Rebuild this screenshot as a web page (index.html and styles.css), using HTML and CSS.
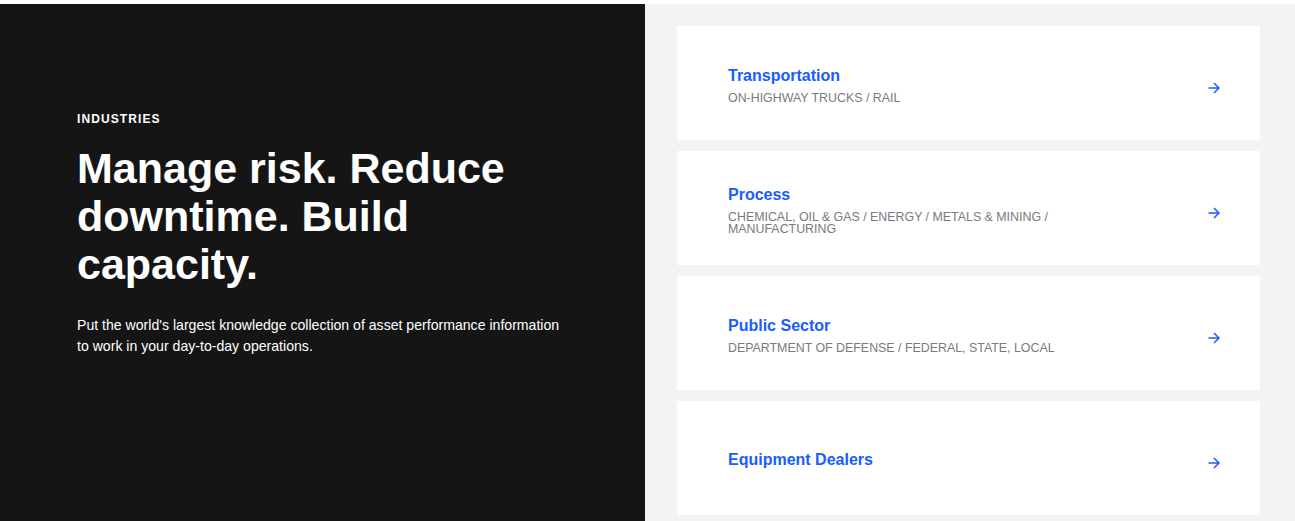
FILE: index.html
```html
<!DOCTYPE html>
<html lang="en">
<head>
<meta charset="utf-8">
<title>Industries</title>
<link rel="stylesheet" href="styles.css">
</head>
<body>
<section class="industries">
  <div class="intro">
    <div class="eyebrow">INDUSTRIES</div>
    <h1 class="headline">Manage risk. Reduce downtime. Build capacity.</h1>
    <p class="lede">Put the world's largest knowledge collection of asset performance information to work in your day-to-day operations.</p>
  </div>
  <div class="list">
    <a class="card" href="#">
      <div class="card-text">
        <div class="card-title">Transportation</div>
        <div class="card-sub">ON-HIGHWAY TRUCKS / RAIL</div>
      </div>
      <svg class="arrow" width="12" height="12" viewBox="0 0 12 12"><path d="M0.5 6H11M6 1l5 5-5 5" fill="none" stroke="#1a5cff" stroke-width="1.5"/></svg>
    </a>
    <a class="card" href="#">
      <div class="card-text">
        <div class="card-title">Process</div>
        <div class="card-sub">CHEMICAL, OIL &amp; GAS / ENERGY / METALS &amp; MINING / MANUFACTURING</div>
      </div>
      <svg class="arrow" width="12" height="12" viewBox="0 0 12 12"><path d="M0.5 6H11M6 1l5 5-5 5" fill="none" stroke="#1a5cff" stroke-width="1.5"/></svg>
    </a>
    <a class="card" href="#">
      <div class="card-text">
        <div class="card-title">Public Sector</div>
        <div class="card-sub">DEPARTMENT OF DEFENSE / FEDERAL, STATE, LOCAL</div>
      </div>
      <svg class="arrow" width="12" height="12" viewBox="0 0 12 12"><path d="M0.5 6H11M6 1l5 5-5 5" fill="none" stroke="#1a5cff" stroke-width="1.5"/></svg>
    </a>
    <a class="card" href="#">
      <div class="card-text">
        <div class="card-title">Equipment Dealers</div>
      </div>
      <svg class="arrow" width="12" height="12" viewBox="0 0 12 12"><path d="M0.5 6H11M6 1l5 5-5 5" fill="none" stroke="#1a5cff" stroke-width="1.5"/></svg>
    </a>
  </div>
</section>
</body>
</html>
```

FILE: styles.css
```css
html, body {
  margin: 0;
  padding: 0;
  background: #ffffff;
  font-family: "Liberation Sans", Arial, sans-serif;
}

body {
  padding-top: 4px;
}

.industries {
  display: flex;
  min-height: 517px;
}

.intro {
  width: 645px;
  flex: none;
  box-sizing: border-box;
  background: #161516;
  color: #ffffff;
  padding: 108px 60px 40px 77px;
}

.eyebrow {
  font-size: 12px;
  font-weight: 700;
  letter-spacing: 1.1px;
  line-height: 14px;
}

.headline {
  margin: 18px 0 0;
  font-size: 43px;
  line-height: 48px;
  font-weight: 700;
  letter-spacing: 0;
  max-width: 460px;
}

.lede {
  margin: 27px 0 0;
  font-size: 14.1px;
  line-height: 21px;
  max-width: 495px;
}

.list {
  flex: 1;
  background: #f3f3f3;
  padding: 22px 35px 6px 32px;
  display: flex;
  flex-direction: column;
  gap: 11px;
}

.card {
  display: flex;
  align-items: center;
  justify-content: space-between;
  height: 114px;
  box-sizing: border-box;
  padding: 4px 40px 0 51px;
  background: #ffffff;
  text-decoration: none;
}

.card-title {
  color: #1a5cff;
  font-size: 16px;
  font-weight: 700;
  line-height: 20px;
}

.card-sub {
  margin-top: 6px;
  color: #7a7a7e;
  font-size: 12.4px;
  line-height: 12px;
  max-width: 350px;
}

.arrow {
  flex: none;
  margin-top: 6px;
}
```
